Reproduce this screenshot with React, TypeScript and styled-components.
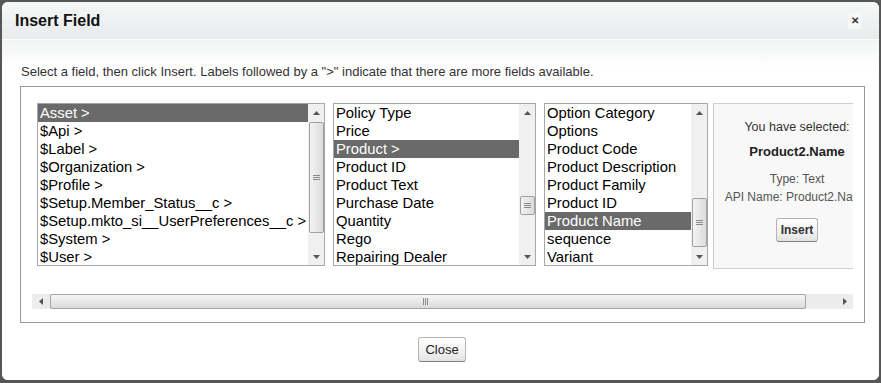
import styled, { createGlobalStyle } from 'styled-components';

const GlobalStyle = createGlobalStyle`
  html, body {
    margin: 0;
    padding: 0;
    background: #565656;
  }
  body {
    padding: 2px 2px 0 2px;
    font-family: 'Liberation Sans', Arial, sans-serif;
  }
`;

type ListData = {
  width: number;
  items: string[];
  selected: number;
  thumbTop: number;
  thumbHeight: number;
};

const lists: ListData[] = [
  {
    width: 288,
    items: [
      'Asset >',
      '$Api >',
      '$Label >',
      '$Organization >',
      '$Profile >',
      '$Setup.Member_Status__c >',
      '$Setup.mkto_si__UserPreferences__c >',
      '$System >',
      '$User >',
    ],
    selected: 0,
    thumbTop: 1,
    thumbHeight: 111,
  },
  {
    width: 203,
    items: [
      'Policy Type',
      'Price',
      'Product >',
      'Product ID',
      'Product Text',
      'Purchase Date',
      'Quantity',
      'Rego',
      'Repairing Dealer',
    ],
    selected: 2,
    thumbTop: 75,
    thumbHeight: 19,
  },
  {
    width: 164,
    items: [
      'Option Category',
      'Options',
      'Product Code',
      'Product Description',
      'Product Family',
      'Product ID',
      'Product Name',
      'sequence',
      'Variant',
    ],
    selected: 6,
    thumbTop: 77,
    thumbHeight: 49,
  },
];

const Arrow = ({ dir }: { dir: 'up' | 'down' | 'left' | 'right' }) => {
  const pts = {
    up: '0,4 3.5,0 7,4',
    down: '0,0 3.5,4 7,0',
    left: '4,0 0,3.5 4,7',
    right: '0,0 4,3.5 0,7',
  }[dir];
  const horiz = dir === 'left' || dir === 'right';
  return (
    <svg width={horiz ? 4 : 7} height={horiz ? 7 : 4} viewBox={horiz ? '0 0 4 7' : '0 0 7 4'}>
      <polygon points={pts} fill="#555" />
    </svg>
  );
};

const Grip = ({ vertical }: { vertical: boolean }) => (
  <svg width="7" height="7" viewBox="0 0 7 7">
    {vertical
      ? [1, 3, 5].map((y) => <line key={y} x1="0" x2="7" y1={y + 0.5} y2={y + 0.5} stroke="#8a8a8a" />)
      : [1, 3, 5].map((x) => <line key={x} y1="0" y2="7" x1={x + 0.5} x2={x + 0.5} stroke="#8a8a8a" />)}
  </svg>
);

const App = () => {
  return (
    <>
      <GlobalStyle />
      <Dialog>
        <Header>
          <Title>Insert Field</Title>
          <CloseX>✕</CloseX>
        </Header>
        <Body>
          <Instructions>
            Select a field, then click Insert. Labels followed by a "&gt;" indicate that there are more
            fields available.
          </Instructions>
          <FieldBox>
            <Viewport>
              <Columns>
                {lists.map((list, i) => (
                  <ListBox key={i} $width={list.width}>
                    <Items>
                      {list.items.map((item, j) => (
                        <Item key={item} $selected={j === list.selected}>
                          {item}
                        </Item>
                      ))}
                    </Items>
                    <VScroll>
                      <ArrowBox>
                        <Arrow dir="up" />
                      </ArrowBox>
                      <VTrack>
                        <VThumb $top={list.thumbTop} $height={list.thumbHeight}>
                          <Grip vertical />
                        </VThumb>
                      </VTrack>
                      <ArrowBox>
                        <Arrow dir="down" />
                      </ArrowBox>
                    </VScroll>
                  </ListBox>
                ))}
                <SelectedPanel>
                  <PanelLabel>You have selected:</PanelLabel>
                  <PanelName>Product2.Name</PanelName>
                  <PanelType>Type: Text</PanelType>
                  <PanelApi>API Name: Product2.Name</PanelApi>
                  <InsertButton>Insert</InsertButton>
                </SelectedPanel>
              </Columns>
            </Viewport>
            <HScroll>
              <HArrowBox>
                <Arrow dir="left" />
              </HArrowBox>
              <HThumb>
                <Grip vertical={false} />
              </HThumb>
              <HRest>
                <Arrow dir="right" />
              </HRest>
            </HScroll>
          </FieldBox>
          <Footer>
            <CloseButton>Close</CloseButton>
          </Footer>
        </Body>
      </Dialog>
    </>
  );
};

export default App;

const Dialog = styled.div`
  width: 877px;
  height: 378px;
  background: #fff;
  border-radius: 6px;
  overflow: hidden;
  display: flex;
  flex-direction: column;
`;

const Header = styled.div`
  height: 37px;
  display: flex;
  align-items: center;
  justify-content: space-between;
  padding: 0 17px 0 13px;
  background: linear-gradient(#f6f8f8, #e7ebeb);
  border-bottom: 1px solid #fbfcfc;
`;

const Title = styled.h2`
  margin: 0;
  font-size: 16px;
  font-weight: 700;
  color: #111;
`;

const CloseX = styled.span`
  width: 14px;
  height: 16px;
  display: flex;
  align-items: center;
  justify-content: center;
  font-size: 10px;
  font-weight: 700;
  color: #333;
  background: #f6f8f8;
`;

const Body = styled.div`
  flex: 1;
  padding: 24px 15px 0 18px;
  background: linear-gradient(#f2f4f4, #fff 28px);
`;

const Instructions = styled.p`
  margin: 0 0 7px 1px;
  font-size: 13px;
  line-height: 15px;
  color: #333;
`;

const FieldBox = styled.div`
  width: 845px;
  box-sizing: border-box;
  border: 1px solid #9a9a9a;
  padding: 0 11px 13px 11px;
`;

const Viewport = styled.div`
  width: 821px;
  height: 207px;
  overflow: hidden;
`;

const Columns = styled.div`
  display: flex;
  align-items: flex-start;
  gap: 8px;
  padding: 16px 0 0 5px;
  width: max-content;
`;

const ListBox = styled.div<{ $width: number }>`
  width: ${(p) => p.$width}px;
  height: 163px;
  box-sizing: border-box;
  border: 1px solid #a7a7a7;
  display: flex;
  background: #fff;
`;

const Items = styled.div`
  flex: 1;
  overflow: hidden;
  min-width: 0;
`;

const Item = styled.div<{ $selected: boolean }>`
  height: 18px;
  line-height: 18px;
  padding-left: 2px;
  font-size: 14.8px;
  white-space: nowrap;
  color: ${(p) => (p.$selected ? '#fff' : '#000')};
  background: ${(p) => (p.$selected ? '#6a6a6a' : 'transparent')};
`;

const VScroll = styled.div`
  width: 16px;
  flex-shrink: 0;
  display: flex;
  flex-direction: column;
  background: #f0f0f0;
`;

const ArrowBox = styled.div`
  height: 17px;
  display: flex;
  align-items: center;
  justify-content: center;
`;

const VTrack = styled.div`
  flex: 1;
  display: flex;
  flex-direction: column;
  align-items: center;
`;

const VThumb = styled.div<{ $top: number; $height: number }>`
  margin-top: ${(p) => p.$top}px;
  height: ${(p) => p.$height}px;
  width: 15px;
  box-sizing: border-box;
  border: 1px solid #a0a0a0;
  border-radius: 2px;
  background: linear-gradient(90deg, #f3f3f3, #dcdcdc);
  display: flex;
  align-items: center;
  justify-content: center;
`;

const SelectedPanel = styled.div`
  width: 168px;
  height: 166px;
  margin-left: -3px;
  box-sizing: border-box;
  border: 1px solid #cfcfcf;
  background: #f8f8f8;
  display: flex;
  flex-direction: column;
  align-items: center;
  padding-top: 16px;
  color: #333;
`;

const PanelLabel = styled.div`
  font-size: 12.5px;
  line-height: 14px;
  white-space: nowrap;
`;

const PanelName = styled.div`
  margin-top: 10px;
  font-size: 13px;
  font-weight: 700;
  line-height: 16px;
  color: #222;
  white-space: nowrap;
`;

const PanelType = styled.div`
  margin-top: 12px;
  font-size: 12px;
  line-height: 14px;
  color: #555;
  white-space: nowrap;
`;

const PanelApi = styled(PanelType)`
  margin-top: 4px;
`;

const InsertButton = styled.button`
  margin-top: 14px;
  height: 24px;
  padding: 0 4px;
  font-family: 'Liberation Sans', Arial, sans-serif;
  font-size: 12px;
  font-weight: 700;
  color: #333;
  border: 1px solid #b5b5b5;
  border-bottom-color: #7f7f7f;
  border-radius: 3px;
  background: linear-gradient(#fff, #f1f1f1 60%, #e2e2e2);
`;

const HScroll = styled.div`
  width: 821px;
  height: 15px;
  display: flex;
  align-items: stretch;
  background: #ececec;
`;

const HArrowBox = styled.div`
  width: 18px;
  display: flex;
  align-items: center;
  justify-content: center;
`;

const HThumb = styled.div`
  width: 756px;
  box-sizing: border-box;
  border: 1px solid #a5a5a5;
  border-radius: 2px;
  background: linear-gradient(#f6f6f6, #dadada);
  display: flex;
  align-items: center;
  justify-content: flex-end;
  padding-right: 376px;
`;

const HRest = styled.div`
  flex: 1;
  display: flex;
  align-items: center;
  justify-content: flex-end;
  padding-right: 6px;
`;

const Footer = styled.div`
  display: flex;
  justify-content: center;
  padding-top: 14px;
`;

const CloseButton = styled.button`
  height: 25px;
  padding: 0 6px;
  font-family: 'Liberation Sans', Arial, sans-serif;
  font-size: 13px;
  font-weight: 400;
  color: #222;
  border: 1px solid #b5b5b5;
  border-bottom-color: #7f7f7f;
  border-radius: 3px;
  background: linear-gradient(#fff, #f1f1f1 60%, #e2e2e2);
`;
